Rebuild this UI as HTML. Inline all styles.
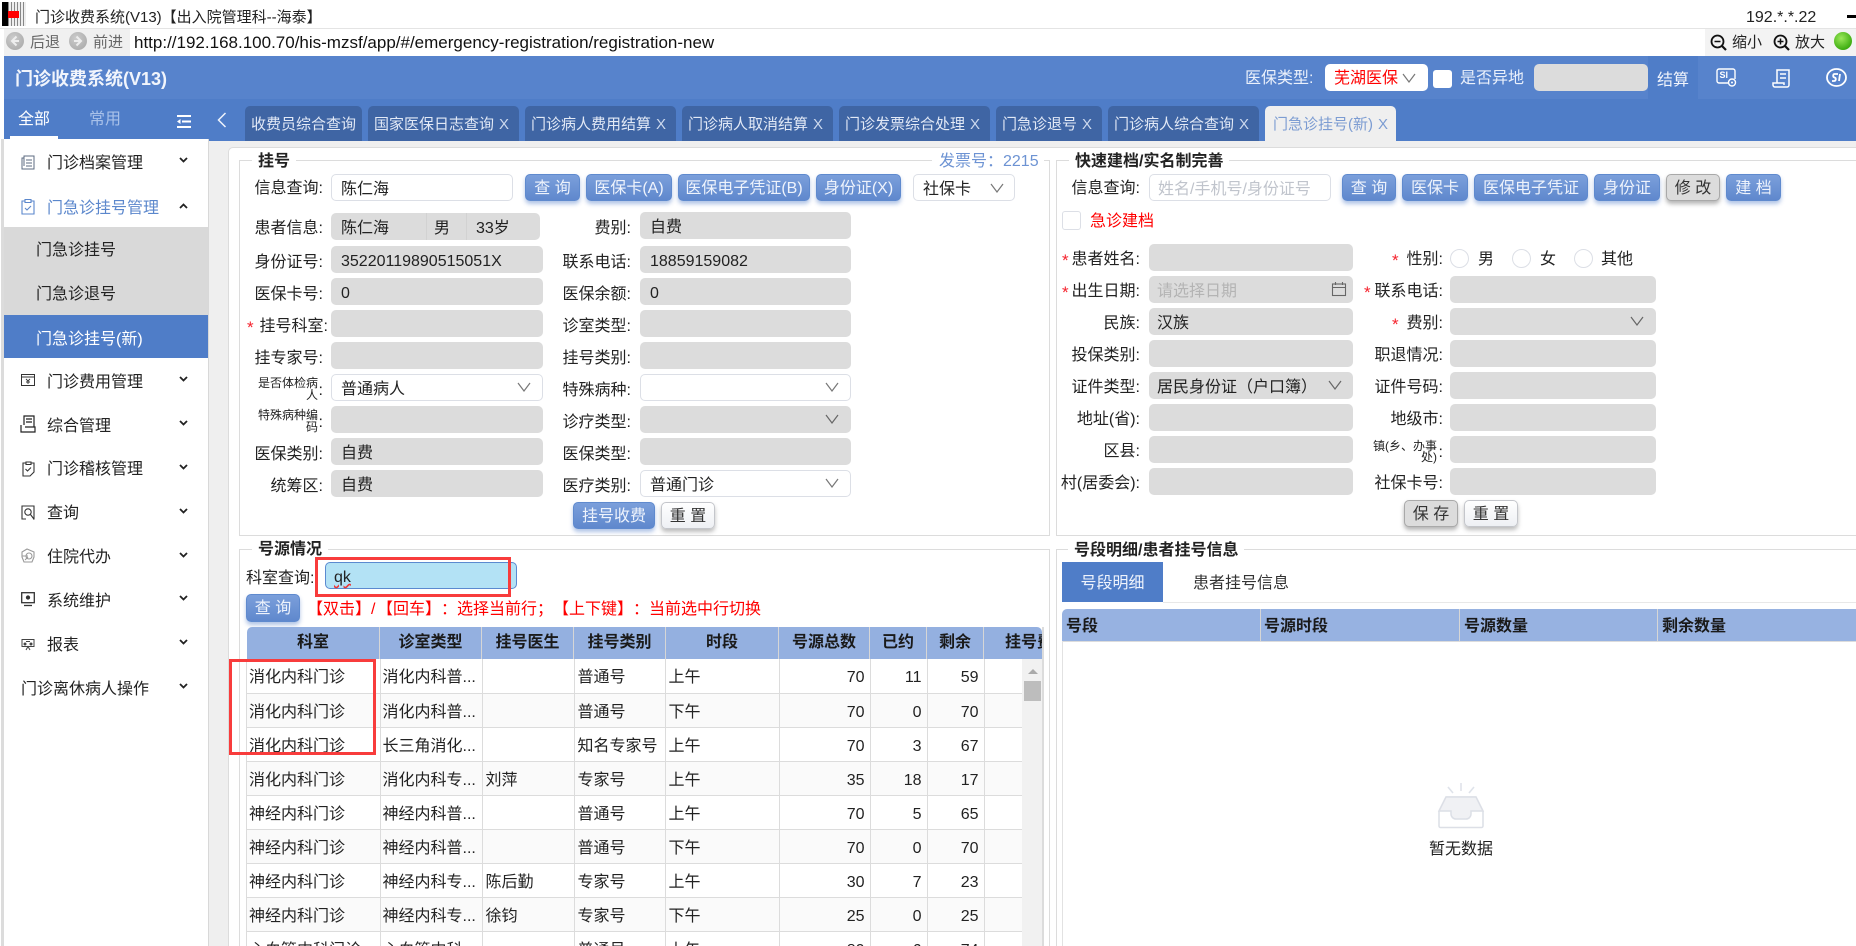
<!DOCTYPE html>
<html lang="zh"><head><meta charset="utf-8"><title>门诊收费系统(V13)</title>
<style>
*{box-sizing:border-box}
html,body{margin:0;padding:0;width:1856px;height:946px;overflow:hidden;background:#fff}
body{position:relative;font-family:"Liberation Sans","Noto Sans CJK SC",sans-serif;font-size:16px;color:#222;text-spacing-trim:space-all}
#root{position:absolute;left:0;top:0;width:1856px;height:946px;overflow:hidden}
.a{position:absolute}
.t{position:absolute;white-space:nowrap;line-height:20px;height:20px;margin-top:2px}
.g{position:absolute;background:#dcdcdc;border-radius:5px;height:27px;line-height:31px;padding-left:10px;white-space:nowrap;overflow:hidden}
.i{position:absolute;background:#fff;border:1px solid #dcdfe6;border-radius:5px;height:27px;line-height:29px;padding-left:9px;white-space:nowrap;overflow:hidden}
.b{position:absolute;top:174px;height:27px;line-height:27px;text-align:center;border-radius:5px;border:1px solid #5f8ace;background:linear-gradient(#7b9fdb,#5f88cd);color:#eef3fc;box-shadow:0 3px 4px rgba(80,125,200,.45);white-space:nowrap}
.n{background:linear-gradient(#fff,#eef0f4);color:#333;border-color:#c4c6cb;box-shadow:0 3px 4px rgba(90,90,90,.4)}
.k{background:#dcdcdc;color:#333;border-color:#a9a9a9;box-shadow:0 3px 4px rgba(90,90,90,.45)}
.tab{position:absolute;top:106px;height:35px;background:#3f65a4;border-radius:5px 5px 0 0;color:#e2e9f6;font-size:15px;line-height:35px;padding-top:1px;padding-left:6px;white-space:nowrap;overflow:hidden}
.tab i{font-style:normal;margin-left:5px;color:#cdd9ee;font-size:15px}
.m{position:absolute;left:47px;white-space:nowrap;line-height:20px;margin-top:2px}
.l{position:absolute;white-space:nowrap;line-height:20px;height:20px;text-align:right;margin-top:2px}
.s{font-size:12px;line-height:12px;height:12px;margin-top:0}
.r{position:absolute;color:#f5222d;font-size:17px;line-height:20px;margin-top:3px}
.f{position:absolute;border:1px solid #dcdcdc}
.o{position:absolute;width:19px;height:19px;border:1px solid #dcdfe6;border-radius:50%;top:249px;background:#fff}
svg{position:absolute;overflow:visible}
table{border-collapse:collapse;table-layout:fixed;font-size:16px;width:775px}
td{border-right:1px solid #dcdcdc;border-bottom:1px solid #dcdcdc;height:34px;padding:4px 3px 0;white-space:nowrap;overflow:hidden;line-height:29px}
td:nth-child(-n+2){padding-left:2px}
td.n2{text-align:right;padding-right:5px}
tr:nth-child(even) td{background:#fafafa}
.h{position:absolute;top:627px;height:32px;line-height:32px;font-weight:700;text-align:center;border-right:1px solid #d6d6d6;color:#1a1a1a;white-space:nowrap}
.h2{position:absolute;top:609px;height:32px;line-height:32px;padding-top:2px;font-weight:700;color:#1a1a1a;white-space:nowrap}
</style></head><body><div id="root">

<!-- title bar -->
<div class="a" style="left:2px;top:2px;width:6px;height:24px;background:#000"></div>
<div class="a" style="left:8px;top:2px;width:18px;height:24px;background:repeating-linear-gradient(90deg,#888 0 1px,#eee 1px 3px)"></div>
<div class="a" style="left:8px;top:11px;width:11px;height:7px;background:#f00"></div>
<div class="t" style="left:35px;top:6px;font-size:15px">门诊收费系统(V13)【出入院管理科--海泰】</div>
<div class="t" style="left:1746px;top:6px;font-size:16px">192.*.*.22</div>
<div class="a" style="left:1847px;top:15px;width:9px;height:3px;background:#000"></div>
<div class="a" style="left:0;top:28px;width:1856px;height:1px;background:#e4e4e4"></div>

<!-- address bar -->
<div class="a" style="left:4px;top:29px;width:126px;height:27px;background:#f0f0f0"></div>
<div class="a" style="left:6px;top:32px;width:18px;height:18px;border-radius:50%;background:radial-gradient(circle at 40% 35%,#ccc,#a5a5a5)"></div>
<svg style="left:6px;top:32px" width="18" height="18" viewBox="0 0 18 18"><path d="M10.500 4.500 6 9l4.500 4.500M6 9h7" fill="none" stroke="#eee" stroke-width="2"/></svg>
<div class="t" style="left:30px;top:31px;color:#666;font-size:15px">后退</div>
<div class="a" style="left:69px;top:32px;width:18px;height:18px;border-radius:50%;background:radial-gradient(circle at 40% 35%,#ccc,#a5a5a5)"></div>
<svg style="left:69px;top:32px" width="18" height="18" viewBox="0 0 18 18"><path d="M7.500 4.500 12 9l-4.500 4.500M12 9H5" fill="none" stroke="#eee" stroke-width="2"/></svg>
<div class="t" style="left:93px;top:31px;color:#666;font-size:15px">前进</div>
<div class="t" style="left:134px;top:31px;font-size:17px;color:#111">http://192.168.100.70/his-mzsf/app/#/emergency-registration/registration-new</div>
<div class="a" style="left:1705px;top:29px;width:151px;height:27px;background:#f3f3f3"></div>
<svg style="left:1710px;top:34px" width="18" height="18" viewBox="0 0 18 18"><circle cx="7.500" cy="7.500" r="6" fill="none" stroke="#111" stroke-width="1.800"/><path d="M12 12l4 4" stroke="#111" stroke-width="2.200"/><path d="M4.500 7.500h6" stroke="#111" stroke-width="1.500"/></svg>
<div class="t" style="left:1732px;top:31px;font-size:15px">缩小</div>
<svg style="left:1773px;top:34px" width="18" height="18" viewBox="0 0 18 18"><circle cx="7.500" cy="7.500" r="6" fill="none" stroke="#111" stroke-width="1.800"/><path d="M12 12l4 4" stroke="#111" stroke-width="2.200"/><path d="M4.500 7.500h6M7.500 4.500v6" stroke="#111" stroke-width="1.500"/></svg>
<div class="t" style="left:1795px;top:31px;font-size:15px">放大</div>
<div class="a" style="left:1834px;top:32px;width:18px;height:18px;border-radius:50%;background:radial-gradient(circle at 40% 35%,#9be85a,#3fae12 70%,#2d8a0b)"></div>

<!-- header -->
<div class="a" style="left:4px;top:56px;width:1852px;height:43px;background:#5783cc"></div>
<div class="t" style="left:15px;top:67px;font-size:18px;font-weight:700;color:#f1f5fc">门诊收费系统(V13)</div>
<div class="t" style="left:1245px;top:67px;color:#eaf0fb">医保类型:</div>
<div class="a" style="left:1325px;top:64px;width:103px;height:27px;background:#fff;border-radius:5px"></div>
<div class="t" style="left:1334px;top:67px;color:#f00">芜湖医保</div>
<svg style="left:1402px;top:73px" width="14" height="10"><path d="M1 1l6 8 6-8" fill="none" stroke="#777" stroke-width="1.200"/></svg>
<div class="a" style="left:1433px;top:70px;width:19px;height:18px;background:#fff;border-radius:3px"></div>
<div class="t" style="left:1460px;top:67px;color:#eaf0fb">是否异地</div>
<div class="a" style="left:1534px;top:64px;width:114px;height:27px;background:#dcdcdc;border-radius:5px"></div>
<div class="a" style="left:1648px;top:56px;width:50px;height:43px;background:#4f7dc8"></div>
<div class="t" style="left:1657px;top:69px;color:#f0f4fc">结算</div>
<svg style="left:1716px;top:68px" width="22" height="20" viewBox="0 0 22 20"><path d="M13 15H3a2 2 0 0 1-2-2V3a2 2 0 0 1 2-2h14a2 2 0 0 1 2 2v8" fill="none" stroke="#fff" stroke-width="1.400"/><text x="3.500" y="10" font-size="9" font-weight="700" fill="#fff" font-family="Liberation Sans">SI</text><circle cx="16" cy="14.500" r="3.500" fill="none" stroke="#fff" stroke-width="1.400"/><circle cx="16" cy="14.500" r="1" fill="#fff"/></svg>
<svg style="left:1772px;top:68px" width="19" height="20" viewBox="0 0 19 20"><path d="M5 15V2h12v15a2 2 0 0 1-2 2H3a2 2 0 0 1-2-2v-2h11v2" fill="none" stroke="#fff" stroke-width="1.500"/><path d="M8 6h6M8 10h6" stroke="#fff" stroke-width="1.500"/></svg>
<svg style="left:1826px;top:68px" width="21" height="19" viewBox="0 0 21 19"><ellipse cx="10.500" cy="9.500" rx="9.500" ry="8.500" fill="none" stroke="#fff" stroke-width="1.800"/><path d="M12 6H8.500C7 6 6.500 9 8.500 9.500 10.500 10 10 13 8 13H6" fill="none" stroke="#fff" stroke-width="1.800"/><path d="M14 6l-1 7" stroke="#fff" stroke-width="1.800"/></svg>

<!-- tab row -->
<div class="a" style="left:4px;top:99px;width:1852px;height:42px;background:#4f7dc8"></div>
<div class="t" style="left:18px;top:108px;color:#fff">全部</div>
<div class="t" style="left:89px;top:108px;color:#a8c1e9">常用</div>
<div class="a" style="left:10px;top:136px;width:48px;height:3px;background:#fff"></div>
<svg style="left:176px;top:114px" width="16" height="15" viewBox="0 0 16 15"><path d="M1 2h14M6 7.500h9M1 13h14" stroke="#fff" stroke-width="2"/><path d="M1 7.500 4.500 5v5z" fill="#fff"/></svg>
<svg style="left:217px;top:112px" width="10" height="16" viewBox="0 0 10 16"><path d="M8.500 1 1.500 8l7 7" fill="none" stroke="#eef3fc" stroke-width="1.500"/></svg>
<div class="tab" style="left:245px;width:117px">收费员综合查询</div>
<div class="tab" style="left:368px;width:151px">国家医保日志查询<i>X</i></div>
<div class="tab" style="left:525px;width:151px">门诊病人费用结算<i>X</i></div>
<div class="tab" style="left:682px;width:151px">门诊病人取消结算<i>X</i></div>
<div class="tab" style="left:839px;width:151px">门诊发票综合处理<i>X</i></div>
<div class="tab" style="left:996px;width:106px">门急诊退号<i>X</i></div>
<div class="tab" style="left:1108px;width:151px">门诊病人综合查询<i>X</i></div>
<div class="tab" style="left:1265px;width:131px;background:#efefef;color:#7c9cd2;padding-left:8px">门急诊挂号(新)<i style="color:#7c9cd2">X</i></div>

<!-- sidebar -->
<div class="a" style="left:1px;top:139px;width:3px;height:807px;background:#dcdcdc"></div>
<div class="a" style="left:4px;top:139px;width:205px;height:807px;background:#fff;border-right:1px solid #d8d8d8"></div>
<div class="a" style="left:4px;top:227px;width:204px;height:88px;background:#d9d9d9"></div>
<div class="a" style="left:4px;top:315px;width:204px;height:43px;background:#4f7dc8"></div>
<div class="m" style="top:152px;">门诊档案管理</div>
<div class="m" style="top:197px;color:#5b87cc">门急诊挂号管理</div>
<div class="m" style="top:239px;left:36px">门急诊挂号</div>
<div class="m" style="top:283px;left:36px">门急诊退号</div>
<div class="m" style="top:328px;left:36px;color:#fff">门急诊挂号(新)</div>
<div class="m" style="top:371px">门诊费用管理</div>
<div class="m" style="top:415px">综合管理</div>
<div class="m" style="top:458px">门诊稽核管理</div>
<div class="m" style="top:502px">查询</div>
<div class="m" style="top:546px">住院代办</div>
<div class="m" style="top:590px">系统维护</div>
<div class="m" style="top:634px">报表</div>
<div class="m" style="top:678px;left:21px">门诊离休病人操作</div>
<!-- sidebar chevrons -->
<svg style="left:179px;top:157px" width="9" height="6"><path d="M1 1l3.500 3.500L8 1" fill="none" stroke="#222" stroke-width="1.800"/></svg>
<svg style="left:179px;top:203px" width="9" height="6"><path d="M1 5l3.500-3.500L8 5" fill="none" stroke="#222" stroke-width="1.800"/></svg>
<svg style="left:179px;top:376px" width="9" height="6"><path d="M1 1l3.500 3.500L8 1" fill="none" stroke="#222" stroke-width="1.800"/></svg>
<svg style="left:179px;top:420px" width="9" height="6"><path d="M1 1l3.500 3.500L8 1" fill="none" stroke="#222" stroke-width="1.800"/></svg>
<svg style="left:179px;top:464px" width="9" height="6"><path d="M1 1l3.500 3.500L8 1" fill="none" stroke="#222" stroke-width="1.800"/></svg>
<svg style="left:179px;top:508px" width="9" height="6"><path d="M1 1l3.500 3.500L8 1" fill="none" stroke="#222" stroke-width="1.800"/></svg>
<svg style="left:179px;top:552px" width="9" height="6"><path d="M1 1l3.500 3.500L8 1" fill="none" stroke="#222" stroke-width="1.800"/></svg>
<svg style="left:179px;top:595px" width="9" height="6"><path d="M1 1l3.500 3.500L8 1" fill="none" stroke="#222" stroke-width="1.800"/></svg>
<svg style="left:179px;top:639px" width="9" height="6"><path d="M1 1l3.500 3.500L8 1" fill="none" stroke="#222" stroke-width="1.800"/></svg>
<svg style="left:179px;top:683px" width="9" height="6"><path d="M1 1l3.500 3.500L8 1" fill="none" stroke="#222" stroke-width="1.800"/></svg>
<!-- sidebar icons -->
<svg style="left:21px;top:154px" width="14" height="16" viewBox="0 0 14 16" fill="none" stroke="#5c6b80" stroke-width="1"><path d="M3 2h10v13H1V4h2zM3 2v10"/><path d="M5 6h6M5 9h6M5 12h6"/></svg>
<svg style="left:21px;top:198px" width="14" height="17" viewBox="0 0 14 17" fill="none" stroke="#5b87cc" stroke-width="1.100"><path d="M4 3H1v13h12V3h-3"/><path d="M4 1.500h6v3H4z"/><path d="M4 10l2 2 4-4"/></svg>
<svg style="left:21px;top:373px" width="14" height="14" viewBox="0 0 14 14" fill="none" stroke="#333" stroke-width="1"><rect x=".5" y="1.500" width="13" height="11"/><path d="M.5 4h13"/><path d="M5 6l2 2 2-2M7 8v3M5 9h4" stroke-width=".9"/></svg>
<svg style="left:20px;top:415px" width="16" height="18" viewBox="0 0 16 18" fill="none" stroke="#222" stroke-width="1.200"><path d="M4 10V1h10v11M1 10v7h14v-5H5"/><path d="M6 4h6M6 7h6"/></svg>
<svg style="left:22px;top:461px" width="13" height="16" viewBox="0 0 13 16" fill="none" stroke="#333" stroke-width="1.100"><path d="M4 2H1v13h7l4-4V2H9"/><path d="M4 1h5v2.500H4z"/><path d="M3.500 8l2 2 3.500-3.500"/></svg>
<svg style="left:21px;top:505px" width="14" height="15" viewBox="0 0 14 15" fill="none" stroke="#333" stroke-width="1.100"><path d="M5 14H1V1h12v13h-1"/><circle cx="7" cy="7" r="3.200"/><path d="M9.500 9.500l3 4"/></svg>
<svg style="left:21px;top:548px" width="14" height="15" viewBox="0 0 14 15" fill="none" stroke="#999" stroke-width="1.100"><path d="M1 4l5-3 7 3v5l-2 5H3L1 9z"/><circle cx="8" cy="8" r="3"/><path d="M1 8h6M4 12l3-3"/></svg>
<svg style="left:21px;top:592px" width="14" height="15" viewBox="0 0 14 15" fill="none" stroke="#333" stroke-width="1.300"><rect x=".7" y=".7" width="12.600" height="10"/><path d="M3 13.500h8"/><circle cx="7" cy="5.500" r="1.500" fill="#333"/></svg>
<svg style="left:21px;top:637px" width="14" height="14" viewBox="0 0 14 14" fill="none" stroke="#444" stroke-width="1"><path d="M1 2.500h12v7H1zM5 13l2-3.500L9 13M5 4.500h4"/><circle cx="4" cy="7" r="1" fill="#444"/><circle cx="10" cy="7" r="1" fill="#444"/></svg>

<!-- content bg -->
<div class="a" style="left:209px;top:141px;width:1647px;height:805px;background:#efefef"></div>
<div class="a" style="left:228px;top:147px;width:1628px;height:799px;background:#fff;border:1px solid #dcdcdc;border-width:1px 0 0 1px;border-radius:5px 0 0 0"></div>

<!-- fieldsets -->
<div class="f" style="left:239px;top:160px;width:811px;height:376px"></div>
<div class="f" style="left:1056px;top:160px;width:800px;height:376px;border-right:0"></div>
<div class="f" style="left:239px;top:549px;width:811px;height:397px;border-bottom:0"></div>
<div class="f" style="left:1056px;top:549px;width:800px;height:397px;border-right:0;border-bottom:0"></div>
<div class="t" style="left:252px;top:150px;background:#fff;padding:0 6px;font-weight:700">挂号</div>
<div class="t" style="left:932px;top:150px;background:#fff;padding:0 5px 0 7px;color:#6d93d3;font-size:16px">发票号：2215</div>
<div class="t" style="left:1069px;top:150px;background:#fff;padding:0 6px;font-weight:700">快速建档/实名制完善</div>
<div class="t" style="left:252px;top:538px;background:#fff;padding:0 6px;font-weight:700">号源情况</div>
<div class="t" style="left:1068px;top:539px;background:#fff;padding:0 6px;font-weight:700">号段明细/患者挂号信息</div>

<!-- left form -->
<div class="l" style="right:1533px;top:177px">信息查询:</div>
<div class="i" style="left:331px;top:174px;width:182px">陈仁海</div>
<div class="b" style="left:525px;width:55px">查 询</div>
<div class="b" style="left:586px;width:86px">医保卡(A)</div>
<div class="b" style="left:678px;width:132px">医保电子凭证(B)</div>
<div class="b" style="left:816px;width:85px">身份证(X)</div>
<div class="i" style="left:913px;top:174px;width:102px">社保卡</div>
<svg style="left:990px;top:183px" width="14" height="10"><path d="M1 1l6 8 6-8" fill="none" stroke="#777" stroke-width="1.200"/></svg>

<div class="l" style="right:1533px;top:217px">患者信息:</div>
<div class="g" style="left:331px;top:213px;width:209px">陈仁海</div>
<div class="a" style="left:426px;top:213px;width:1px;height:27px;background:#d2d2d2"></div>
<div class="a" style="left:466px;top:213px;width:1px;height:27px;background:#d2d2d2"></div>
<div class="t" style="left:434px;top:217px">男</div>
<div class="t" style="left:476px;top:217px">33岁</div>
<div class="l" style="right:1225px;top:217px">费别:</div>
<div class="g" style="left:640px;top:212px;width:211px">自费</div>

<div class="l" style="right:1533px;top:251px">身份证号:</div>
<div class="g" style="left:331px;top:246px;width:212px">35220119890515051X</div>
<div class="l" style="right:1225px;top:251px">联系电话:</div>
<div class="g" style="left:640px;top:246px;width:211px">18859159082</div>

<div class="l" style="right:1533px;top:283px">医保卡号:</div>
<div class="g" style="left:331px;top:278px;width:212px">0</div>
<div class="l" style="right:1225px;top:283px">医保余额:</div>
<div class="g" style="left:640px;top:278px;width:211px">0</div>

<div class="r" style="left:247px;top:315px">*</div>
<div class="l" style="right:1528px;top:315px">挂号科室:</div>
<div class="g" style="left:331px;top:310px;width:212px"></div>
<div class="l" style="right:1225px;top:315px">诊室类型:</div>
<div class="g" style="left:640px;top:310px;width:211px"></div>

<div class="l" style="right:1533px;top:347px">挂专家号:</div>
<div class="g" style="left:331px;top:342px;width:212px"></div>
<div class="l" style="right:1225px;top:347px">挂号类别:</div>
<div class="g" style="left:640px;top:342px;width:211px"></div>

<div class="l s" style="right:1538px;top:377px">是否体检病</div>
<div class="l s" style="right:1538px;top:389px">人</div>
<div class="l" style="right:1533px;top:379px">:</div>
<div class="i" style="left:331px;top:374px;width:212px">普通病人</div>
<svg style="left:517px;top:382px" width="14" height="10"><path d="M1 1l6 8 6-8" fill="none" stroke="#777" stroke-width="1.200"/></svg>
<div class="l" style="right:1225px;top:379px">特殊病种:</div>
<div class="i" style="left:640px;top:374px;width:211px"></div>
<svg style="left:825px;top:382px" width="14" height="10"><path d="M1 1l6 8 6-8" fill="none" stroke="#777" stroke-width="1.200"/></svg>

<div class="l s" style="right:1538px;top:409px">特殊病种编</div>
<div class="l s" style="right:1538px;top:421px">码</div>
<div class="l" style="right:1533px;top:411px">:</div>
<div class="g" style="left:331px;top:406px;width:212px"></div>
<div class="l" style="right:1225px;top:411px">诊疗类型:</div>
<div class="g" style="left:640px;top:406px;width:211px"></div>
<svg style="left:825px;top:414px" width="14" height="10"><path d="M1 1l6 8 6-8" fill="none" stroke="#666" stroke-width="1.200"/></svg>

<div class="l" style="right:1533px;top:443px">医保类别:</div>
<div class="g" style="left:331px;top:438px;width:212px">自费</div>
<div class="l" style="right:1225px;top:443px">医保类型:</div>
<div class="g" style="left:640px;top:438px;width:211px"></div>

<div class="l" style="right:1533px;top:475px">统筹区:</div>
<div class="g" style="left:331px;top:470px;width:212px">自费</div>
<div class="l" style="right:1225px;top:475px">医疗类别:</div>
<div class="i" style="left:640px;top:470px;width:211px">普通门诊</div>
<svg style="left:825px;top:478px" width="14" height="10"><path d="M1 1l6 8 6-8" fill="none" stroke="#777" stroke-width="1.200"/></svg>

<div class="b" style="left:573px;top:502px;width:82px">挂号收费</div>
<div class="b n" style="left:661px;top:502px;width:54px">重 置</div>

<!-- right form -->
<div class="l" style="right:716px;top:177px">信息查询:</div>
<div class="i" style="left:1149px;top:174px;width:182px;color:#c0c4cc;padding-left:8px">姓名/手机号/身份证号</div>
<div class="b" style="left:1342px;width:54px">查 询</div>
<div class="b" style="left:1402px;width:66px">医保卡</div>
<div class="b" style="left:1474px;width:114px">医保电子凭证</div>
<div class="b" style="left:1594px;width:66px">身份证</div>
<div class="b k" style="left:1666px;width:54px">修 改</div>
<div class="b" style="left:1726px;width:55px">建 档</div>
<div class="a" style="left:1062px;top:211px;width:19px;height:19px;border:1px solid #dcdfe6;border-radius:3px"></div>
<div class="t" style="left:1090px;top:210px;color:#f00">急诊建档</div>

<div class="r" style="left:1062px;top:248px">*</div>
<div class="l" style="right:716px;top:248px">患者姓名:</div>
<div class="g" style="left:1149px;top:244px;width:204px"></div>
<div class="r" style="left:1392px;top:248px">*</div>
<div class="l" style="right:413px;top:248px">性别:</div>
<div class="o" style="left:1450px"></div><div class="t" style="left:1478px;top:248px">男</div>
<div class="o" style="left:1512px"></div><div class="t" style="left:1540px;top:248px">女</div>
<div class="o" style="left:1574px"></div><div class="t" style="left:1601px;top:248px">其他</div>

<div class="r" style="left:1062px;top:280px">*</div>
<div class="l" style="right:716px;top:280px">出生日期:</div>
<div class="g" style="left:1149px;top:276px;width:204px;color:#b4b4b4;padding-left:8px">请选择日期</div>
<svg style="left:1332px;top:282px" width="14" height="14" viewBox="0 0 14 14" fill="none" stroke="#666" stroke-width="1.100"><rect x=".5" y="2" width="13" height="11.500"/><path d="M.5 5.500h13M3.500 0v3M10.500 0v3"/></svg>
<div class="r" style="left:1364px;top:280px">*</div>
<div class="l" style="right:413px;top:280px">联系电话:</div>
<div class="g" style="left:1450px;top:276px;width:206px"></div>

<div class="l" style="right:716px;top:312px">民族:</div>
<div class="g" style="left:1149px;top:308px;width:204px;padding-left:8px">汉族</div>
<div class="r" style="left:1392px;top:312px">*</div>
<div class="l" style="right:413px;top:312px">费别:</div>
<div class="g" style="left:1450px;top:308px;width:206px"></div>
<svg style="left:1630px;top:316px" width="14" height="10"><path d="M1 1l6 8 6-8" fill="none" stroke="#666" stroke-width="1.200"/></svg>

<div class="l" style="right:716px;top:344px">投保类别:</div>
<div class="g" style="left:1149px;top:340px;width:204px"></div>
<div class="l" style="right:413px;top:344px">职退情况:</div>
<div class="g" style="left:1450px;top:340px;width:206px"></div>

<div class="l" style="right:716px;top:376px">证件类型:</div>
<div class="g" style="left:1149px;top:372px;width:204px;padding-left:8px">居民身份证（户口簿）</div>
<svg style="left:1328px;top:380px" width="14" height="10"><path d="M1 1l6 8 6-8" fill="none" stroke="#666" stroke-width="1.200"/></svg>
<div class="l" style="right:413px;top:376px">证件号码:</div>
<div class="g" style="left:1450px;top:372px;width:206px"></div>

<div class="l" style="right:716px;top:408px">地址(省):</div>
<div class="g" style="left:1149px;top:404px;width:204px"></div>
<div class="l" style="right:413px;top:408px">地级市:</div>
<div class="g" style="left:1450px;top:404px;width:206px"></div>

<div class="l" style="right:716px;top:440px">区县:</div>
<div class="g" style="left:1149px;top:436px;width:204px"></div>
<div class="l s" style="right:419px;top:440px">镇(乡、办事</div>
<div class="l s" style="right:419px;top:451px">处)</div>
<div class="l" style="right:413px;top:441px">:</div>
<div class="g" style="left:1450px;top:436px;width:206px"></div>

<div class="l" style="right:716px;top:472px">村(居委会):</div>
<div class="g" style="left:1149px;top:468px;width:204px"></div>
<div class="l" style="right:413px;top:472px">社保卡号:</div>
<div class="g" style="left:1450px;top:468px;width:206px"></div>

<div class="b k" style="left:1404px;top:500px;width:54px">保 存</div>
<div class="b n" style="left:1464px;top:500px;width:54px">重 置</div>

<!-- 号源情况 -->
<div class="t" style="left:246px;top:567px">科室查询:</div>
<div class="a" style="left:325px;top:562px;width:192px;height:27px;background:#b3e2f5;border:1px solid #5b8ad0;border-radius:5px;line-height:29px;padding-left:8px"><span style="text-decoration:underline wavy #e33">qk</span></div>
<div class="b" style="left:246px;top:594px;width:54px;height:28px;line-height:28px">查 询</div>
<div class="t" style="left:307px;top:598px;color:#f00">【双击】/</div>
<div class="t" style="left:377px;top:598px;color:#f00">【回车】：选择当前行；【上下键】：当前选中行切换</div>

<!-- table header -->
<div class="a" style="left:247px;top:627px;width:795px;height:32px;background:#94b0e0;border-radius:5px 5px 0 0"></div>
<div class="h" style="left:247px;width:133px">科室</div>
<div class="h" style="left:380px;width:102px">诊室类型</div>
<div class="h" style="left:482px;width:92px">挂号医生</div>
<div class="h" style="left:574px;width:92px">挂号类别</div>
<div class="h" style="left:666px;width:113px">时段</div>
<div class="h" style="left:779px;width:91px">号源总数</div>
<div class="h" style="left:870px;width:57px">已约</div>
<div class="h" style="left:927px;width:57px">剩余</div>
<div class="a" style="left:984px;top:627px;width:58px;height:32px;line-height:32px;overflow:hidden;font-weight:700;color:#1a1a1a;white-space:nowrap;padding-left:21px;border-radius:0 5px 0 0">挂号费用</div>

<!-- table body -->
<div class="a" style="left:247px;top:659px;width:775px;height:287px;overflow:hidden">
<table>
<colgroup><col style="width:133px"><col style="width:102px"><col style="width:92px"><col style="width:91px"><col style="width:114px"><col style="width:91px"><col style="width:57px"><col style="width:57px"><col style="width:38px"></colgroup>
<tbody>
<tr><td>消化内科门诊</td><td>消化内科普...</td><td></td><td>普通号</td><td>上午</td><td class="n2">70</td><td class="n2">11</td><td class="n2">59</td><td></td></tr>
<tr><td>消化内科门诊</td><td>消化内科普...</td><td></td><td>普通号</td><td>下午</td><td class="n2">70</td><td class="n2">0</td><td class="n2">70</td><td></td></tr>
<tr><td>消化内科门诊</td><td>长三角消化...</td><td></td><td>知名专家号</td><td>上午</td><td class="n2">70</td><td class="n2">3</td><td class="n2">67</td><td></td></tr>
<tr><td>消化内科门诊</td><td>消化内科专...</td><td>刘萍</td><td>专家号</td><td>上午</td><td class="n2">35</td><td class="n2">18</td><td class="n2">17</td><td></td></tr>
<tr><td>神经内科门诊</td><td>神经内科普...</td><td></td><td>普通号</td><td>上午</td><td class="n2">70</td><td class="n2">5</td><td class="n2">65</td><td></td></tr>
<tr><td>神经内科门诊</td><td>神经内科普...</td><td></td><td>普通号</td><td>下午</td><td class="n2">70</td><td class="n2">0</td><td class="n2">70</td><td></td></tr>
<tr><td>神经内科门诊</td><td>神经内科专...</td><td>陈后勤</td><td>专家号</td><td>上午</td><td class="n2">30</td><td class="n2">7</td><td class="n2">23</td><td></td></tr>
<tr><td>神经内科门诊</td><td>神经内科专...</td><td>徐钧</td><td>专家号</td><td>下午</td><td class="n2">25</td><td class="n2">0</td><td class="n2">25</td><td></td></tr>
<tr><td>心血管内科门诊</td><td>心血管内科...</td><td></td><td>普通号</td><td>上午</td><td class="n2">80</td><td class="n2">6</td><td class="n2">74</td><td></td></tr>
</tbody></table>
</div>
<!-- scrollbar -->
<div class="a" style="left:1022px;top:659px;width:20px;height:287px;background:#f1f1f1"></div>
<div class="a" style="left:1024px;top:681px;width:17px;height:20px;background:#bdbdbd"></div>
<div class="a" style="left:1028px;top:669px;width:0;height:0;border-left:5px solid transparent;border-right:5px solid transparent;border-bottom:5px solid #aaa"></div>
<div class="a" style="left:1042px;top:627px;width:2px;height:319px;background:#dcdcdc"></div>
<div class="a" style="left:246px;top:659px;width:1px;height:287px;background:#dcdcdc"></div>

<!-- right bottom -->
<div class="a" style="left:1062px;top:562px;width:101px;height:40px;background:#4f7dc8;color:#eef3fc;line-height:40px;padding-top:2px;text-align:center">号段明细</div>
<div class="a" style="left:1163px;top:602px;width:693px;height:1px;background:#e8e8e8"></div>
<div class="t" style="left:1193px;top:572px;color:#333">患者挂号信息</div>
<div class="a" style="left:1062px;top:609px;width:794px;height:32px;background:#97b2e1;border-radius:5px 0 0 0"></div>
<div class="a" style="left:1260px;top:609px;width:1px;height:32px;background:#d6d6d6"></div>
<div class="a" style="left:1459px;top:609px;width:1px;height:32px;background:#d6d6d6"></div>
<div class="a" style="left:1657px;top:609px;width:1px;height:32px;background:#d6d6d6"></div>
<div class="h2" style="left:1066px">号段</div>
<div class="h2" style="left:1264px">号源时段</div>
<div class="h2" style="left:1464px">号源数量</div>
<div class="h2" style="left:1662px">剩余数量</div>
<div class="a" style="left:1062px;top:641px;width:794px;height:1px;background:#dcdcdc"></div>
<div class="a" style="left:1062px;top:641px;width:1px;height:305px;background:#e2e2e2"></div>

<svg style="left:1438px;top:783px" width="46" height="45" viewBox="0 0 46 45"><path d="M23 0v8M10 4l5 6M36 4l-5 6" stroke="#dfe3ea" stroke-width="1.600" fill="none"/><path d="M8 14h30l7 14v15a1.500 1.500 0 0 1-1.500 1.500h-41A1.500 1.500 0 0 1 1 43V28z" fill="#fff" stroke="#dcdfe6" stroke-width="1.500"/><path d="M8 14h30l7 14H33v3a5 5 0 0 1-5 5h-10a5 5 0 0 1-5-5v-3H1z" fill="#f0f1f4" stroke="#dcdfe6" stroke-width="1.500"/></svg>
<div class="t" style="left:1429px;top:838px;color:#222">暂无数据</div>

<!-- annotation boxes -->
<div class="a" style="left:315px;top:557px;width:196px;height:40px;border:3px solid #f83c3c"></div>
<div class="a" style="left:229px;top:659px;width:147px;height:96px;border:3px solid #f83c3c"></div>
</div></body></html>
